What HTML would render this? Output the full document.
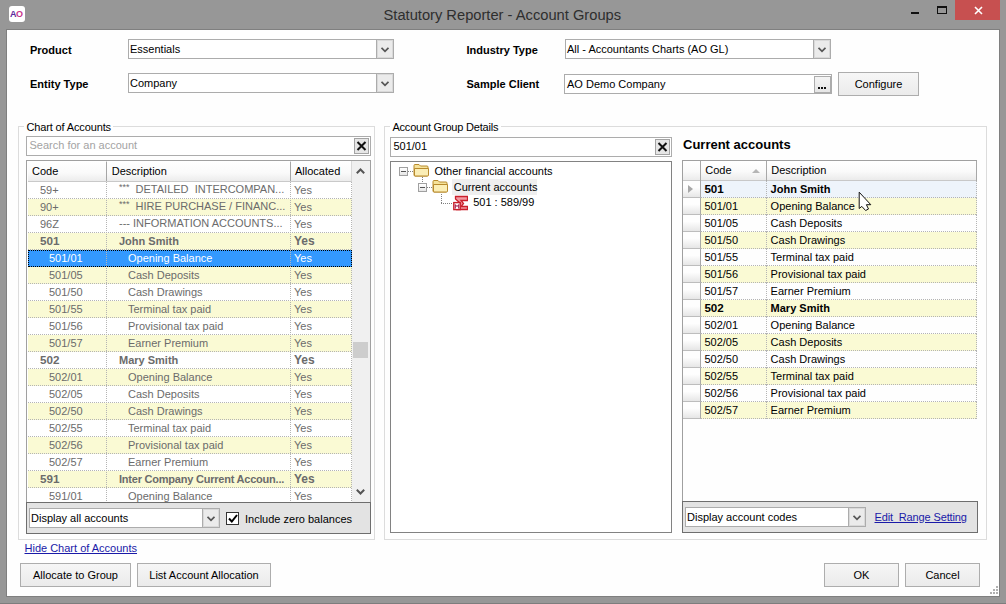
<!DOCTYPE html>
<html><head><meta charset="utf-8">
<style>
*{box-sizing:border-box;margin:0;padding:0}
html,body{width:1006px;height:604px;overflow:hidden;background:#979797;font-family:"Liberation Sans",sans-serif;font-size:11px;color:#000;position:relative}
.a{position:absolute}
.t{position:absolute;white-space:nowrap}
</style></head><body>
<div class="a" style="left:0px;top:603px;width:1006px;height:1px;background:#7d7d7d"></div>
<div class="a" style="left:6px;top:29px;width:994px;height:568px;background:#fefefe;border:1px solid #7f7f7f"></div>
<div class="a" style="left:9px;top:6px;width:16px;height:16px;background:#fff;border-radius:3px"></div>
<div class="t" style="left:10px;width:15px;font-size:9px;line-height:10px;font-weight:bold;letter-spacing:-0.5px;color:#5b2a9e;top:9px">A<span style="color:#c8338a">O</span></div>
<div class="t" style="left:383.5px;top:6.61px;font-size:14.7px;line-height:17px;color:#2e2e2e;">Statutory Reporter - Account Groups</div>
<div class="a" style="left:911px;top:12px;width:8px;height:2px;background:#111"></div>
<div class="a" style="left:937px;top:6px;width:10px;height:8px;border:1px solid #111;border-top-width:2px"></div>
<div class="a" style="left:955px;top:0px;width:45px;height:20px;background:#c75050"></div>
<svg class="a" style="left:974px;top:6px" width="9" height="9" viewBox="0 0 9 9"><path d="M1 1L8 8M8 1L1 8" stroke="#fff" stroke-width="1.6"/></svg>
<div class="t" style="left:30px;top:43.69px;font-size:11px;line-height:13px;font-weight:bold;">Product</div>
<div class="t" style="left:30px;top:77.69px;font-size:11px;line-height:13px;font-weight:bold;">Entity Type</div>
<div class="t" style="left:466.5px;top:43.69px;font-size:11px;line-height:13px;font-weight:bold;">Industry Type</div>
<div class="t" style="left:466.5px;top:77.99px;font-size:11px;line-height:13px;font-weight:bold;">Sample Client</div>
<div class="a" style="left:128px;top:39px;width:266px;height:20px;background:#fff;border:1px solid #acacac"></div>
<div class="a" style="left:376px;top:39px;width:18px;height:20px;background:#ebebeb;border:1px solid #acacac;box-shadow:inset 0 0 0 1px #d9d9d9"></div>
<svg class="a" style="left:381px;top:47px" width="8" height="6" viewBox="0 0 8 6"><path d="M0.5 0.8 L4 4.3 L7.5 0.8" fill="none" stroke="#555" stroke-width="1.8"/></svg>
<div class="t" style="left:130px;top:42.69px;font-size:11px;line-height:13px;">Essentials</div>
<div class="a" style="left:128px;top:73px;width:266px;height:20px;background:#fff;border:1px solid #acacac"></div>
<div class="a" style="left:376px;top:73px;width:18px;height:20px;background:#ebebeb;border:1px solid #acacac;box-shadow:inset 0 0 0 1px #d9d9d9"></div>
<svg class="a" style="left:381px;top:81px" width="8" height="6" viewBox="0 0 8 6"><path d="M0.5 0.8 L4 4.3 L7.5 0.8" fill="none" stroke="#555" stroke-width="1.8"/></svg>
<div class="t" style="left:130px;top:76.69px;font-size:11px;line-height:13px;">Company</div>
<div class="a" style="left:565px;top:39px;width:266px;height:20px;background:#fff;border:1px solid #acacac"></div>
<div class="a" style="left:813px;top:39px;width:18px;height:20px;background:#ebebeb;border:1px solid #acacac;box-shadow:inset 0 0 0 1px #d9d9d9"></div>
<svg class="a" style="left:818px;top:47px" width="8" height="6" viewBox="0 0 8 6"><path d="M0.5 0.8 L4 4.3 L7.5 0.8" fill="none" stroke="#555" stroke-width="1.8"/></svg>
<div class="t" style="left:567px;top:42.69px;font-size:11px;line-height:13px;">All - Accountants Charts (AO GL)</div>
<div class="a" style="left:564px;top:74px;width:268px;height:20px;background:#fff;border:1px solid #acacac"></div>
<div class="t" style="left:567px;top:77.69px;font-size:11px;line-height:13px;">AO Demo Company</div>
<div class="a" style="left:814px;top:76px;width:17px;height:17px;border:1px solid #acacac;background:linear-gradient(#f4f4f4,#e6e6e6)"></div>
<div class="a" style="left:818px;top:87px;width:2px;height:2px;background:#111;box-shadow:3px 0 #111,6px 0 #111"></div>
<div class="a" style="left:838px;top:72px;width:81px;height:24px;border:1px solid #adadad;background:linear-gradient(#f6f6f6,#ebebeb)"></div>
<div class="t" style="left:838px;top:76.17px;width:81px;text-align:center;line-height:16px">Configure</div>
<div class="a" style="left:18px;top:126px;width:357px;height:414px;border:1px solid #dcdcdc"></div>
<div class="a" style="left:24px;top:120px;width:89px;height:12px;background:#fefefe"></div>
<div class="t" style="left:26.5px;top:120.99px;font-size:11px;line-height:13px;letter-spacing:-0.14px">Chart of Accounts</div>
<div class="a" style="left:26px;top:136px;width:345px;height:20px;background:#fff;border:1px solid #acacac"></div>
<div class="t" style="left:29.5px;top:139.19px;font-size:11px;line-height:13px;color:#a3a3a3;">Search for an account</div>
<div class="a" style="left:354px;top:138px;width:15px;height:16px;border:1px solid #a3a3a3;background:#e6e6e6"></div>
<svg class="a" style="left:356px;top:141px" width="11" height="10" viewBox="0 0 11 10"><path d="M1.5 1L9.5 9M9.5 1L1.5 9" stroke="#111" stroke-width="2"/></svg>
<div class="a" style="left:26px;top:160px;width:345px;height:343px;background:#fff;border:1px solid #a0a0a0"></div>
<div class="a" style="left:28px;top:161px;width:79px;height:21px;background:linear-gradient(#ffffff 0%,#fafafa 60%,#ececec 100%);border-right:1px solid #d8d8d8;border-bottom:1px solid #c9c9c9"></div>
<div class="a" style="left:107px;top:161px;width:184px;height:21px;background:linear-gradient(#ffffff 0%,#fafafa 60%,#ececec 100%);border-right:1px solid #d8d8d8;border-bottom:1px solid #c9c9c9"></div>
<div class="a" style="left:291px;top:161px;width:61px;height:21px;background:linear-gradient(#ffffff 0%,#fafafa 60%,#ececec 100%);border-right:1px solid #d8d8d8;border-bottom:1px solid #c9c9c9"></div>
<div class="a" style="left:106px;top:162px;width:1px;height:19px;background:#a5a5a5"></div>
<div class="a" style="left:290px;top:162px;width:1px;height:19px;background:#a5a5a5"></div>
<div class="t" style="left:32px;top:165.29px;font-size:11px;line-height:13px;">Code</div>
<div class="t" style="left:111.8px;top:165.09px;font-size:11px;line-height:13px;">Description</div>
<div class="t" style="left:295px;top:165.09px;font-size:11px;line-height:13px;">Allocated</div>
<div class="a" style="left:352px;top:161px;width:18px;height:341px;background:#f0f0f0"></div>
<svg class="a" style="left:356px;top:168px" width="9" height="6" viewBox="0 0 9 6"><path d="M0.8 5.2L4.5 1.5L8.2 5.2" fill="none" stroke="#555" stroke-width="2"/></svg>
<svg class="a" style="left:356px;top:489px" width="9" height="6" viewBox="0 0 9 6"><path d="M0.8 0.8L4.5 4.5L8.2 0.8" fill="none" stroke="#555" stroke-width="2"/></svg>
<div class="a" style="left:353px;top:342px;width:15px;height:16px;background:#cdcdcd"></div>
<div class="a" style="left:28px;top:182px;width:324px;height:320px;overflow:hidden">
<div class="a" style="left:0px;top:0px;width:324px;height:17px;background:#ffffff"></div>
<div class="a" style="left:0px;top:16px;width:324px;height:1px;background-image:linear-gradient(to right,#b4b4b4 50%,transparent 50%);background-size:2px 1px;background-repeat:repeat-x"></div>
<div class="t" style="left:12px;top:1.59px;font-size:11px;line-height:13px;color:#6b6b6b;">59+</div>
<div class="t" style="left:91px;top:0.59px;font-size:11px;line-height:13px;color:#6b6b6b;"><span style="font-size:9px;position:relative;top:-3px;margin-right:3px">***</span> DETAILED&nbsp; INTERCOMPAN...</div>
<div class="t" style="left:266px;top:1.59px;font-size:11px;line-height:13px;color:#6b6b6b;">Yes</div>
<div class="a" style="left:0px;top:17px;width:324px;height:17px;background:#fafad4"></div>
<div class="a" style="left:0px;top:33px;width:324px;height:1px;background-image:linear-gradient(to right,#b4b4b4 50%,transparent 50%);background-size:2px 1px;background-repeat:repeat-x"></div>
<div class="t" style="left:12px;top:18.59px;font-size:11px;line-height:13px;color:#6b6b6b;">90+</div>
<div class="t" style="left:91px;top:17.59px;font-size:11px;line-height:13px;color:#6b6b6b;"><span style="font-size:9px;position:relative;top:-3px;margin-right:3px">***</span> HIRE PURCHASE / FINANC...</div>
<div class="t" style="left:266px;top:18.59px;font-size:11px;line-height:13px;color:#6b6b6b;">Yes</div>
<div class="a" style="left:0px;top:34px;width:324px;height:17px;background:#ffffff"></div>
<div class="a" style="left:0px;top:50px;width:324px;height:1px;background-image:linear-gradient(to right,#b4b4b4 50%,transparent 50%);background-size:2px 1px;background-repeat:repeat-x"></div>
<div class="t" style="left:12px;top:35.59px;font-size:11px;line-height:13px;color:#6b6b6b;">96Z</div>
<div class="t" style="left:91px;top:34.59px;font-size:11px;line-height:13px;color:#6b6b6b;">--- INFORMATION ACCOUNTS...</div>
<div class="t" style="left:266px;top:35.59px;font-size:11px;line-height:13px;color:#6b6b6b;">Yes</div>
<div class="a" style="left:0px;top:51px;width:324px;height:17px;background:#fafad4"></div>
<div class="a" style="left:0px;top:67px;width:324px;height:1px;background-image:linear-gradient(to right,#b4b4b4 50%,transparent 50%);background-size:2px 1px;background-repeat:repeat-x"></div>
<div class="t" style="left:12px;top:51.85px;font-size:11.7px;line-height:13px;font-weight:bold;color:#6b6b6b;">501</div>
<div class="t" style="left:91px;top:52.59px;font-size:11px;line-height:13px;font-weight:bold;color:#6b6b6b;">John Smith</div>
<div class="t" style="left:266px;top:51.74px;font-size:12px;line-height:14px;font-weight:bold;color:#6b6b6b;">Yes</div>
<div class="a" style="left:0px;top:68px;width:324px;height:17px;background:#3399ff"></div>
<div class="t" style="left:21px;top:69.59px;font-size:11px;line-height:13px;color:#fff;">501/01</div>
<div class="t" style="left:100px;top:69.59px;font-size:11px;line-height:13px;color:#fff;">Opening Balance</div>
<div class="t" style="left:266px;top:69.59px;font-size:11px;line-height:13px;color:#fff;">Yes</div>
<div class="a" style="left:0px;top:85px;width:324px;height:17px;background:#fafad4"></div>
<div class="a" style="left:0px;top:101px;width:324px;height:1px;background-image:linear-gradient(to right,#b4b4b4 50%,transparent 50%);background-size:2px 1px;background-repeat:repeat-x"></div>
<div class="t" style="left:21px;top:86.59px;font-size:11px;line-height:13px;color:#6b6b6b;">501/05</div>
<div class="t" style="left:100px;top:86.59px;font-size:11px;line-height:13px;color:#6b6b6b;">Cash Deposits</div>
<div class="t" style="left:266px;top:86.59px;font-size:11px;line-height:13px;color:#6b6b6b;">Yes</div>
<div class="a" style="left:0px;top:102px;width:324px;height:17px;background:#ffffff"></div>
<div class="a" style="left:0px;top:118px;width:324px;height:1px;background-image:linear-gradient(to right,#b4b4b4 50%,transparent 50%);background-size:2px 1px;background-repeat:repeat-x"></div>
<div class="t" style="left:21px;top:103.59px;font-size:11px;line-height:13px;color:#6b6b6b;">501/50</div>
<div class="t" style="left:100px;top:103.59px;font-size:11px;line-height:13px;color:#6b6b6b;">Cash Drawings</div>
<div class="t" style="left:266px;top:103.59px;font-size:11px;line-height:13px;color:#6b6b6b;">Yes</div>
<div class="a" style="left:0px;top:119px;width:324px;height:17px;background:#fafad4"></div>
<div class="a" style="left:0px;top:135px;width:324px;height:1px;background-image:linear-gradient(to right,#b4b4b4 50%,transparent 50%);background-size:2px 1px;background-repeat:repeat-x"></div>
<div class="t" style="left:21px;top:120.59px;font-size:11px;line-height:13px;color:#6b6b6b;">501/55</div>
<div class="t" style="left:100px;top:120.59px;font-size:11px;line-height:13px;color:#6b6b6b;">Terminal tax paid</div>
<div class="t" style="left:266px;top:120.59px;font-size:11px;line-height:13px;color:#6b6b6b;">Yes</div>
<div class="a" style="left:0px;top:136px;width:324px;height:17px;background:#ffffff"></div>
<div class="a" style="left:0px;top:152px;width:324px;height:1px;background-image:linear-gradient(to right,#b4b4b4 50%,transparent 50%);background-size:2px 1px;background-repeat:repeat-x"></div>
<div class="t" style="left:21px;top:137.59px;font-size:11px;line-height:13px;color:#6b6b6b;">501/56</div>
<div class="t" style="left:100px;top:137.59px;font-size:11px;line-height:13px;color:#6b6b6b;">Provisional tax paid</div>
<div class="t" style="left:266px;top:137.59px;font-size:11px;line-height:13px;color:#6b6b6b;">Yes</div>
<div class="a" style="left:0px;top:153px;width:324px;height:17px;background:#fafad4"></div>
<div class="a" style="left:0px;top:169px;width:324px;height:1px;background-image:linear-gradient(to right,#b4b4b4 50%,transparent 50%);background-size:2px 1px;background-repeat:repeat-x"></div>
<div class="t" style="left:21px;top:154.59px;font-size:11px;line-height:13px;color:#6b6b6b;">501/57</div>
<div class="t" style="left:100px;top:154.59px;font-size:11px;line-height:13px;color:#6b6b6b;">Earner Premium</div>
<div class="t" style="left:266px;top:154.59px;font-size:11px;line-height:13px;color:#6b6b6b;">Yes</div>
<div class="a" style="left:0px;top:170px;width:324px;height:17px;background:#ffffff"></div>
<div class="a" style="left:0px;top:186px;width:324px;height:1px;background-image:linear-gradient(to right,#b4b4b4 50%,transparent 50%);background-size:2px 1px;background-repeat:repeat-x"></div>
<div class="t" style="left:12px;top:170.85px;font-size:11.7px;line-height:13px;font-weight:bold;color:#6b6b6b;">502</div>
<div class="t" style="left:91px;top:171.59px;font-size:11px;line-height:13px;font-weight:bold;color:#6b6b6b;">Mary Smith</div>
<div class="t" style="left:266px;top:170.74px;font-size:12px;line-height:14px;font-weight:bold;color:#6b6b6b;">Yes</div>
<div class="a" style="left:0px;top:187px;width:324px;height:17px;background:#fafad4"></div>
<div class="a" style="left:0px;top:203px;width:324px;height:1px;background-image:linear-gradient(to right,#b4b4b4 50%,transparent 50%);background-size:2px 1px;background-repeat:repeat-x"></div>
<div class="t" style="left:21px;top:188.59px;font-size:11px;line-height:13px;color:#6b6b6b;">502/01</div>
<div class="t" style="left:100px;top:188.59px;font-size:11px;line-height:13px;color:#6b6b6b;">Opening Balance</div>
<div class="t" style="left:266px;top:188.59px;font-size:11px;line-height:13px;color:#6b6b6b;">Yes</div>
<div class="a" style="left:0px;top:204px;width:324px;height:17px;background:#ffffff"></div>
<div class="a" style="left:0px;top:220px;width:324px;height:1px;background-image:linear-gradient(to right,#b4b4b4 50%,transparent 50%);background-size:2px 1px;background-repeat:repeat-x"></div>
<div class="t" style="left:21px;top:205.59px;font-size:11px;line-height:13px;color:#6b6b6b;">502/05</div>
<div class="t" style="left:100px;top:205.59px;font-size:11px;line-height:13px;color:#6b6b6b;">Cash Deposits</div>
<div class="t" style="left:266px;top:205.59px;font-size:11px;line-height:13px;color:#6b6b6b;">Yes</div>
<div class="a" style="left:0px;top:221px;width:324px;height:17px;background:#fafad4"></div>
<div class="a" style="left:0px;top:237px;width:324px;height:1px;background-image:linear-gradient(to right,#b4b4b4 50%,transparent 50%);background-size:2px 1px;background-repeat:repeat-x"></div>
<div class="t" style="left:21px;top:222.59px;font-size:11px;line-height:13px;color:#6b6b6b;">502/50</div>
<div class="t" style="left:100px;top:222.59px;font-size:11px;line-height:13px;color:#6b6b6b;">Cash Drawings</div>
<div class="t" style="left:266px;top:222.59px;font-size:11px;line-height:13px;color:#6b6b6b;">Yes</div>
<div class="a" style="left:0px;top:238px;width:324px;height:17px;background:#ffffff"></div>
<div class="a" style="left:0px;top:254px;width:324px;height:1px;background-image:linear-gradient(to right,#b4b4b4 50%,transparent 50%);background-size:2px 1px;background-repeat:repeat-x"></div>
<div class="t" style="left:21px;top:239.59px;font-size:11px;line-height:13px;color:#6b6b6b;">502/55</div>
<div class="t" style="left:100px;top:239.59px;font-size:11px;line-height:13px;color:#6b6b6b;">Terminal tax paid</div>
<div class="t" style="left:266px;top:239.59px;font-size:11px;line-height:13px;color:#6b6b6b;">Yes</div>
<div class="a" style="left:0px;top:255px;width:324px;height:17px;background:#fafad4"></div>
<div class="a" style="left:0px;top:271px;width:324px;height:1px;background-image:linear-gradient(to right,#b4b4b4 50%,transparent 50%);background-size:2px 1px;background-repeat:repeat-x"></div>
<div class="t" style="left:21px;top:256.59px;font-size:11px;line-height:13px;color:#6b6b6b;">502/56</div>
<div class="t" style="left:100px;top:256.59px;font-size:11px;line-height:13px;color:#6b6b6b;">Provisional tax paid</div>
<div class="t" style="left:266px;top:256.59px;font-size:11px;line-height:13px;color:#6b6b6b;">Yes</div>
<div class="a" style="left:0px;top:272px;width:324px;height:17px;background:#ffffff"></div>
<div class="a" style="left:0px;top:288px;width:324px;height:1px;background-image:linear-gradient(to right,#b4b4b4 50%,transparent 50%);background-size:2px 1px;background-repeat:repeat-x"></div>
<div class="t" style="left:21px;top:273.59px;font-size:11px;line-height:13px;color:#6b6b6b;">502/57</div>
<div class="t" style="left:100px;top:273.59px;font-size:11px;line-height:13px;color:#6b6b6b;">Earner Premium</div>
<div class="t" style="left:266px;top:273.59px;font-size:11px;line-height:13px;color:#6b6b6b;">Yes</div>
<div class="a" style="left:0px;top:289px;width:324px;height:17px;background:#fafad4"></div>
<div class="a" style="left:0px;top:305px;width:324px;height:1px;background-image:linear-gradient(to right,#b4b4b4 50%,transparent 50%);background-size:2px 1px;background-repeat:repeat-x"></div>
<div class="t" style="left:12px;top:289.85px;font-size:11.7px;line-height:13px;font-weight:bold;color:#6b6b6b;">591</div>
<div class="t" style="left:91px;top:290.59px;font-size:11px;line-height:13px;font-weight:bold;color:#6b6b6b;"><span style="letter-spacing:-0.22px">Inter Company Current Accoun...</span></div>
<div class="t" style="left:266px;top:289.74px;font-size:12px;line-height:14px;font-weight:bold;color:#6b6b6b;">Yes</div>
<div class="a" style="left:0px;top:306px;width:324px;height:17px;background:#ffffff"></div>
<div class="a" style="left:0px;top:322px;width:324px;height:1px;background-image:linear-gradient(to right,#b4b4b4 50%,transparent 50%);background-size:2px 1px;background-repeat:repeat-x"></div>
<div class="t" style="left:21px;top:307.59px;font-size:11px;line-height:13px;color:#6b6b6b;">591/01</div>
<div class="t" style="left:100px;top:307.59px;font-size:11px;line-height:13px;color:#6b6b6b;">Opening Balance</div>
<div class="t" style="left:266px;top:307.59px;font-size:11px;line-height:13px;color:#6b6b6b;">Yes</div>
<div class="a" style="left:78px;top:0px;width:1px;height:320px;background-image:linear-gradient(#b4b4b4 50%,transparent 50%);background-size:1px 2px;background-repeat:repeat-y"></div>
<div class="a" style="left:262px;top:0px;width:1px;height:320px;background-image:linear-gradient(#b4b4b4 50%,transparent 50%);background-size:1px 2px;background-repeat:repeat-y"></div>
<div class="a" style="left:323px;top:0px;width:1px;height:320px;background-image:linear-gradient(#b4b4b4 50%,transparent 50%);background-size:1px 2px;background-repeat:repeat-y"></div>
<div class="a" style="left:0px;top:68px;width:324px;height:17px;border:1px dotted #000"></div>
</div>
<div class="a" style="left:26px;top:502px;width:345px;height:32px;background:#e3e3e3;border:1px solid #6e6e6e"></div>
<div class="a" style="left:29px;top:508px;width:191px;height:20px;background:#fff;border:1px solid #acacac"></div>
<div class="a" style="left:202px;top:508px;width:18px;height:20px;background:#ebebeb;border:1px solid #acacac;box-shadow:inset 0 0 0 1px #d9d9d9"></div>
<svg class="a" style="left:207px;top:516px" width="8" height="6" viewBox="0 0 8 6"><path d="M0.5 0.8 L4 4.3 L7.5 0.8" fill="none" stroke="#555" stroke-width="1.8"/></svg>
<div class="t" style="left:31px;top:511.69px;font-size:11px;line-height:13px;">Display all accounts</div>
<div class="a" style="left:226px;top:512px;width:13px;height:13px;background:#fff;border:1px solid #333"></div>
<svg class="a" style="left:228px;top:514px" width="10" height="9" viewBox="0 0 10 9"><path d="M1 4.5L3.8 7.5L9 1" fill="none" stroke="#000" stroke-width="2"/></svg>
<div class="t" style="left:245px;top:513.19px;font-size:11px;line-height:13px;">Include zero balances</div>
<div class="t" style="left:24.5px;top:541.69px;font-size:11px;line-height:13px;color:#1a1aa8;"><u>Hide Chart of Accounts</u></div>
<div class="a" style="left:20px;top:563px;width:111px;height:24px;border:1px solid #adadad;background:linear-gradient(#f6f6f6,#ebebeb)"></div>
<div class="t" style="left:20px;top:567.17px;width:111px;text-align:center;line-height:16px">Allocate to Group</div>
<div class="a" style="left:137px;top:563px;width:134px;height:24px;border:1px solid #adadad;background:linear-gradient(#f6f6f6,#ebebeb)"></div>
<div class="t" style="left:137px;top:567.17px;width:134px;text-align:center;line-height:16px">List Account Allocation</div>
<div class="a" style="left:824px;top:563px;width:75px;height:24px;border:1px solid #adadad;background:linear-gradient(#f6f6f6,#ebebeb)"></div>
<div class="t" style="left:824px;top:567.17px;width:75px;text-align:center;line-height:16px">OK</div>
<div class="a" style="left:905px;top:563px;width:75px;height:24px;border:1px solid #adadad;background:linear-gradient(#f6f6f6,#ebebeb)"></div>
<div class="t" style="left:905px;top:567.17px;width:75px;text-align:center;line-height:16px">Cancel</div>
<div class="a" style="left:996px;top:586px;width:2px;height:2px;background:#b0b0b0"></div>
<div class="a" style="left:993px;top:589px;width:2px;height:2px;background:#b0b0b0"></div>
<div class="a" style="left:996px;top:589px;width:2px;height:2px;background:#b0b0b0"></div>
<div class="a" style="left:990px;top:592px;width:2px;height:2px;background:#b0b0b0"></div>
<div class="a" style="left:993px;top:592px;width:2px;height:2px;background:#b0b0b0"></div>
<div class="a" style="left:996px;top:592px;width:2px;height:2px;background:#b0b0b0"></div>
<div class="a" style="left:384px;top:126px;width:603px;height:414px;border:1px solid #dcdcdc"></div>
<div class="a" style="left:390px;top:120px;width:111px;height:12px;background:#fefefe"></div>
<div class="t" style="left:392.4px;top:120.99px;font-size:11px;line-height:13px;letter-spacing:-0.2px">Account Group Details</div>
<div class="a" style="left:390px;top:137px;width:282px;height:20px;background:#fff;border:1px solid #acacac"></div>
<div class="t" style="left:393.4px;top:140.09px;font-size:11px;line-height:13px;">501/01</div>
<div class="a" style="left:655px;top:139px;width:15px;height:16px;border:1px solid #a3a3a3;background:#e6e6e6"></div>
<svg class="a" style="left:657px;top:142px" width="11" height="10" viewBox="0 0 11 10"><path d="M1.5 1L9.5 9M9.5 1L1.5 9" stroke="#111" stroke-width="2"/></svg>
<div class="a" style="left:390px;top:161px;width:282px;height:372px;background:#fff;border:1px solid #828282"></div>
<div class="a" style="left:399px;top:167px;width:9px;height:9px;background:linear-gradient(#fff,#e6e6e6);border:1px solid #a0a0a0"></div>
<div class="a" style="left:401px;top:171px;width:5px;height:1px;background:#555"></div>
<div class="a" style="left:408px;top:171px;width:5px;height:1px;background-image:linear-gradient(to right,#808080 50%,transparent 50%);background-size:2px 1px"></div>
<svg class="a" style="left:413px;top:163px" width="17" height="14" viewBox="0 0 17 14"><path d="M1 2.5Q1 1.5 2 1.5H6L7.5 3H14Q15 3 15 4V12Q15 13 14 13H2Q1 13 1 12Z" fill="#f5e29a" stroke="#b88a2c" stroke-width="1"/><path d="M1.5 5.5H15.5V12Q15.5 13 14.5 13H2Q1.5 13 1.5 12Z" fill="#fbeeb6" stroke="#b88a2c" stroke-width="1"/></svg>
<div class="t" style="left:434.5px;top:164.69px;font-size:11px;line-height:13px;">Other financial accounts</div>
<div class="a" style="left:422px;top:177px;width:1px;height:6px;background-image:linear-gradient(#808080 50%,transparent 50%);background-size:1px 2px"></div>
<div class="a" style="left:452px;top:179px;width:85px;height:16px;background:#efefef"></div>
<div class="a" style="left:418px;top:183px;width:9px;height:9px;background:linear-gradient(#fff,#e6e6e6);border:1px solid #a0a0a0"></div>
<div class="a" style="left:420px;top:187px;width:5px;height:1px;background:#555"></div>
<div class="a" style="left:427px;top:187px;width:5px;height:1px;background-image:linear-gradient(to right,#808080 50%,transparent 50%);background-size:2px 1px"></div>
<svg class="a" style="left:432px;top:179px" width="17" height="14" viewBox="0 0 17 14"><path d="M1 2.5Q1 1.5 2 1.5H6L7.5 3H14Q15 3 15 4V12Q15 13 14 13H2Q1 13 1 12Z" fill="#f5e29a" stroke="#b88a2c" stroke-width="1"/><path d="M1.5 5.5H15.5V12Q15.5 13 14.5 13H2Q1.5 13 1.5 12Z" fill="#fbeeb6" stroke="#b88a2c" stroke-width="1"/></svg>
<div class="t" style="left:453.7px;top:180.69px;font-size:11px;line-height:13px;">Current accounts</div>
<div class="a" style="left:441px;top:194px;width:1px;height:9px;background-image:linear-gradient(#808080 50%,transparent 50%);background-size:1px 2px"></div>
<div class="a" style="left:441px;top:203px;width:12px;height:1px;background-image:linear-gradient(to right,#808080 50%,transparent 50%);background-size:2px 1px"></div>
<svg class="a" style="left:453px;top:195px" width="15" height="16" viewBox="0 0 15 16"><path d="M2.5 1.5H14.5V5.5H8L10.5 8.5L8 11.5H14.5V14.5H4L7.5 8.5L2.5 4Z" fill="#f29aa2" stroke="#c91f2b" stroke-width="1.3" stroke-linejoin="miter"/><rect x="0.8" y="7.6" width="6.4" height="7" fill="#fff" stroke="#c91f2b" stroke-width="1.4"/><path d="M2.3 13.6V9.6L4 11.6L5.7 9.6V13.6" fill="none" stroke="#a01040" stroke-width="1"/></svg>
<div class="t" style="left:473.2px;top:196.49px;font-size:11px;line-height:13px;">501 : 589/99</div>
<div class="t" style="left:683px;top:136.50px;font-size:13px;line-height:15px;font-weight:bold;">Current accounts</div>
<div class="a" style="left:682px;top:160px;width:295px;height:342px;background:#fefefe;border-left:1px solid #a0a0a0;border-top:1px solid #a0a0a0"></div>
<div class="a" style="left:683px;top:161px;width:18px;height:20px;background:linear-gradient(#ffffff 0%,#fafafa 55%,#ebebeb 100%);border-right:1px solid #c8c8c8;border-bottom:1px solid #c8c8c8"></div>
<div class="a" style="left:701px;top:161px;width:66px;height:20px;background:linear-gradient(#ffffff 0%,#fafafa 55%,#ebebeb 100%);border-right:1px solid #c8c8c8;border-bottom:1px solid #c8c8c8"></div>
<div class="a" style="left:767px;top:161px;width:210px;height:20px;background:linear-gradient(#ffffff 0%,#fafafa 55%,#ebebeb 100%);border-right:1px solid #c8c8c8;border-bottom:1px solid #c8c8c8"></div>
<div class="a" style="left:700px;top:161px;width:1px;height:20px;background:#a8a8a8"></div>
<div class="a" style="left:766px;top:161px;width:1px;height:20px;background:#a8a8a8"></div>
<div class="a" style="left:976px;top:161px;width:1px;height:20px;background:#a8a8a8"></div>
<div class="t" style="left:705.3px;top:164.09px;font-size:11px;line-height:13px;">Code</div>
<svg class="a" style="left:752px;top:169px" width="8" height="4" viewBox="0 0 8 4"><path d="M0 4L4 0L8 4Z" fill="#b5b5b5"/></svg>
<div class="t" style="left:771.3px;top:164.09px;font-size:11px;line-height:13px;">Description</div>
<div class="a" style="left:683px;top:181px;width:18px;height:17px;background:linear-gradient(#fefefe 40%,#e6e6e6);border-right:1px solid #a8a8a8;border-bottom:1px solid #bdbdbd"></div>
<div class="a" style="left:701px;top:181px;width:276px;height:17px;background:#eef4fb"></div>
<div class="a" style="left:701px;top:197px;width:276px;height:1px;background-image:linear-gradient(to right,#b4b4b4 50%,transparent 50%);background-size:2px 1px;background-repeat:repeat-x"></div>
<div class="a" style="left:766px;top:181px;width:1px;height:17px;background-image:linear-gradient(#b4b4b4 50%,transparent 50%);background-size:1px 2px;background-repeat:repeat-y"></div>
<div class="a" style="left:976px;top:181px;width:1px;height:17px;background-image:linear-gradient(#b4b4b4 50%,transparent 50%);background-size:1px 2px;background-repeat:repeat-y"></div>
<div class="t" style="left:704.4px;top:182.28px;font-size:11.6px;line-height:13px;font-weight:bold;">501</div>
<div class="t" style="left:770.6px;top:183.09px;font-size:11px;line-height:13px;font-weight:bold;">John Smith</div>
<div class="a" style="left:683px;top:198px;width:18px;height:17px;background:linear-gradient(#fefefe 40%,#e6e6e6);border-right:1px solid #a8a8a8;border-bottom:1px solid #bdbdbd"></div>
<div class="a" style="left:701px;top:198px;width:276px;height:17px;background:#fafad4"></div>
<div class="a" style="left:701px;top:214px;width:276px;height:1px;background-image:linear-gradient(to right,#b4b4b4 50%,transparent 50%);background-size:2px 1px;background-repeat:repeat-x"></div>
<div class="a" style="left:766px;top:198px;width:1px;height:17px;background-image:linear-gradient(#b4b4b4 50%,transparent 50%);background-size:1px 2px;background-repeat:repeat-y"></div>
<div class="a" style="left:976px;top:198px;width:1px;height:17px;background-image:linear-gradient(#b4b4b4 50%,transparent 50%);background-size:1px 2px;background-repeat:repeat-y"></div>
<div class="t" style="left:704.4px;top:200.09px;font-size:11px;line-height:13px;">501/01</div>
<div class="t" style="left:770.6px;top:200.09px;font-size:11px;line-height:13px;">Opening Balance</div>
<div class="a" style="left:683px;top:215px;width:18px;height:17px;background:linear-gradient(#fefefe 40%,#e6e6e6);border-right:1px solid #a8a8a8;border-bottom:1px solid #bdbdbd"></div>
<div class="a" style="left:701px;top:215px;width:276px;height:17px;background:#fefefe"></div>
<div class="a" style="left:701px;top:231px;width:276px;height:1px;background-image:linear-gradient(to right,#b4b4b4 50%,transparent 50%);background-size:2px 1px;background-repeat:repeat-x"></div>
<div class="a" style="left:766px;top:215px;width:1px;height:17px;background-image:linear-gradient(#b4b4b4 50%,transparent 50%);background-size:1px 2px;background-repeat:repeat-y"></div>
<div class="a" style="left:976px;top:215px;width:1px;height:17px;background-image:linear-gradient(#b4b4b4 50%,transparent 50%);background-size:1px 2px;background-repeat:repeat-y"></div>
<div class="t" style="left:704.4px;top:217.09px;font-size:11px;line-height:13px;">501/05</div>
<div class="t" style="left:770.6px;top:217.09px;font-size:11px;line-height:13px;">Cash Deposits</div>
<div class="a" style="left:683px;top:232px;width:18px;height:17px;background:linear-gradient(#fefefe 40%,#e6e6e6);border-right:1px solid #a8a8a8;border-bottom:1px solid #bdbdbd"></div>
<div class="a" style="left:701px;top:232px;width:276px;height:17px;background:#fafad4"></div>
<div class="a" style="left:701px;top:248px;width:276px;height:1px;background-image:linear-gradient(to right,#b4b4b4 50%,transparent 50%);background-size:2px 1px;background-repeat:repeat-x"></div>
<div class="a" style="left:766px;top:232px;width:1px;height:17px;background-image:linear-gradient(#b4b4b4 50%,transparent 50%);background-size:1px 2px;background-repeat:repeat-y"></div>
<div class="a" style="left:976px;top:232px;width:1px;height:17px;background-image:linear-gradient(#b4b4b4 50%,transparent 50%);background-size:1px 2px;background-repeat:repeat-y"></div>
<div class="t" style="left:704.4px;top:234.09px;font-size:11px;line-height:13px;">501/50</div>
<div class="t" style="left:770.6px;top:234.09px;font-size:11px;line-height:13px;">Cash Drawings</div>
<div class="a" style="left:683px;top:249px;width:18px;height:17px;background:linear-gradient(#fefefe 40%,#e6e6e6);border-right:1px solid #a8a8a8;border-bottom:1px solid #bdbdbd"></div>
<div class="a" style="left:701px;top:249px;width:276px;height:17px;background:#fefefe"></div>
<div class="a" style="left:701px;top:265px;width:276px;height:1px;background-image:linear-gradient(to right,#b4b4b4 50%,transparent 50%);background-size:2px 1px;background-repeat:repeat-x"></div>
<div class="a" style="left:766px;top:249px;width:1px;height:17px;background-image:linear-gradient(#b4b4b4 50%,transparent 50%);background-size:1px 2px;background-repeat:repeat-y"></div>
<div class="a" style="left:976px;top:249px;width:1px;height:17px;background-image:linear-gradient(#b4b4b4 50%,transparent 50%);background-size:1px 2px;background-repeat:repeat-y"></div>
<div class="t" style="left:704.4px;top:251.09px;font-size:11px;line-height:13px;">501/55</div>
<div class="t" style="left:770.6px;top:251.09px;font-size:11px;line-height:13px;">Terminal tax paid</div>
<div class="a" style="left:683px;top:266px;width:18px;height:17px;background:linear-gradient(#fefefe 40%,#e6e6e6);border-right:1px solid #a8a8a8;border-bottom:1px solid #bdbdbd"></div>
<div class="a" style="left:701px;top:266px;width:276px;height:17px;background:#fafad4"></div>
<div class="a" style="left:701px;top:282px;width:276px;height:1px;background-image:linear-gradient(to right,#b4b4b4 50%,transparent 50%);background-size:2px 1px;background-repeat:repeat-x"></div>
<div class="a" style="left:766px;top:266px;width:1px;height:17px;background-image:linear-gradient(#b4b4b4 50%,transparent 50%);background-size:1px 2px;background-repeat:repeat-y"></div>
<div class="a" style="left:976px;top:266px;width:1px;height:17px;background-image:linear-gradient(#b4b4b4 50%,transparent 50%);background-size:1px 2px;background-repeat:repeat-y"></div>
<div class="t" style="left:704.4px;top:268.09px;font-size:11px;line-height:13px;">501/56</div>
<div class="t" style="left:770.6px;top:268.09px;font-size:11px;line-height:13px;">Provisional tax paid</div>
<div class="a" style="left:683px;top:283px;width:18px;height:17px;background:linear-gradient(#fefefe 40%,#e6e6e6);border-right:1px solid #a8a8a8;border-bottom:1px solid #bdbdbd"></div>
<div class="a" style="left:701px;top:283px;width:276px;height:17px;background:#fefefe"></div>
<div class="a" style="left:701px;top:299px;width:276px;height:1px;background-image:linear-gradient(to right,#b4b4b4 50%,transparent 50%);background-size:2px 1px;background-repeat:repeat-x"></div>
<div class="a" style="left:766px;top:283px;width:1px;height:17px;background-image:linear-gradient(#b4b4b4 50%,transparent 50%);background-size:1px 2px;background-repeat:repeat-y"></div>
<div class="a" style="left:976px;top:283px;width:1px;height:17px;background-image:linear-gradient(#b4b4b4 50%,transparent 50%);background-size:1px 2px;background-repeat:repeat-y"></div>
<div class="t" style="left:704.4px;top:285.09px;font-size:11px;line-height:13px;">501/57</div>
<div class="t" style="left:770.6px;top:285.09px;font-size:11px;line-height:13px;">Earner Premium</div>
<div class="a" style="left:683px;top:300px;width:18px;height:17px;background:linear-gradient(#fefefe 40%,#e6e6e6);border-right:1px solid #a8a8a8;border-bottom:1px solid #bdbdbd"></div>
<div class="a" style="left:701px;top:300px;width:276px;height:17px;background:#fafad4"></div>
<div class="a" style="left:701px;top:316px;width:276px;height:1px;background-image:linear-gradient(to right,#b4b4b4 50%,transparent 50%);background-size:2px 1px;background-repeat:repeat-x"></div>
<div class="a" style="left:766px;top:300px;width:1px;height:17px;background-image:linear-gradient(#b4b4b4 50%,transparent 50%);background-size:1px 2px;background-repeat:repeat-y"></div>
<div class="a" style="left:976px;top:300px;width:1px;height:17px;background-image:linear-gradient(#b4b4b4 50%,transparent 50%);background-size:1px 2px;background-repeat:repeat-y"></div>
<div class="t" style="left:704.4px;top:301.28px;font-size:11.6px;line-height:13px;font-weight:bold;">502</div>
<div class="t" style="left:770.6px;top:302.09px;font-size:11px;line-height:13px;font-weight:bold;">Mary Smith</div>
<div class="a" style="left:683px;top:317px;width:18px;height:17px;background:linear-gradient(#fefefe 40%,#e6e6e6);border-right:1px solid #a8a8a8;border-bottom:1px solid #bdbdbd"></div>
<div class="a" style="left:701px;top:317px;width:276px;height:17px;background:#fefefe"></div>
<div class="a" style="left:701px;top:333px;width:276px;height:1px;background-image:linear-gradient(to right,#b4b4b4 50%,transparent 50%);background-size:2px 1px;background-repeat:repeat-x"></div>
<div class="a" style="left:766px;top:317px;width:1px;height:17px;background-image:linear-gradient(#b4b4b4 50%,transparent 50%);background-size:1px 2px;background-repeat:repeat-y"></div>
<div class="a" style="left:976px;top:317px;width:1px;height:17px;background-image:linear-gradient(#b4b4b4 50%,transparent 50%);background-size:1px 2px;background-repeat:repeat-y"></div>
<div class="t" style="left:704.4px;top:319.09px;font-size:11px;line-height:13px;">502/01</div>
<div class="t" style="left:770.6px;top:319.09px;font-size:11px;line-height:13px;">Opening Balance</div>
<div class="a" style="left:683px;top:334px;width:18px;height:17px;background:linear-gradient(#fefefe 40%,#e6e6e6);border-right:1px solid #a8a8a8;border-bottom:1px solid #bdbdbd"></div>
<div class="a" style="left:701px;top:334px;width:276px;height:17px;background:#fafad4"></div>
<div class="a" style="left:701px;top:350px;width:276px;height:1px;background-image:linear-gradient(to right,#b4b4b4 50%,transparent 50%);background-size:2px 1px;background-repeat:repeat-x"></div>
<div class="a" style="left:766px;top:334px;width:1px;height:17px;background-image:linear-gradient(#b4b4b4 50%,transparent 50%);background-size:1px 2px;background-repeat:repeat-y"></div>
<div class="a" style="left:976px;top:334px;width:1px;height:17px;background-image:linear-gradient(#b4b4b4 50%,transparent 50%);background-size:1px 2px;background-repeat:repeat-y"></div>
<div class="t" style="left:704.4px;top:336.09px;font-size:11px;line-height:13px;">502/05</div>
<div class="t" style="left:770.6px;top:336.09px;font-size:11px;line-height:13px;">Cash Deposits</div>
<div class="a" style="left:683px;top:351px;width:18px;height:17px;background:linear-gradient(#fefefe 40%,#e6e6e6);border-right:1px solid #a8a8a8;border-bottom:1px solid #bdbdbd"></div>
<div class="a" style="left:701px;top:351px;width:276px;height:17px;background:#fefefe"></div>
<div class="a" style="left:701px;top:367px;width:276px;height:1px;background-image:linear-gradient(to right,#b4b4b4 50%,transparent 50%);background-size:2px 1px;background-repeat:repeat-x"></div>
<div class="a" style="left:766px;top:351px;width:1px;height:17px;background-image:linear-gradient(#b4b4b4 50%,transparent 50%);background-size:1px 2px;background-repeat:repeat-y"></div>
<div class="a" style="left:976px;top:351px;width:1px;height:17px;background-image:linear-gradient(#b4b4b4 50%,transparent 50%);background-size:1px 2px;background-repeat:repeat-y"></div>
<div class="t" style="left:704.4px;top:353.09px;font-size:11px;line-height:13px;">502/50</div>
<div class="t" style="left:770.6px;top:353.09px;font-size:11px;line-height:13px;">Cash Drawings</div>
<div class="a" style="left:683px;top:368px;width:18px;height:17px;background:linear-gradient(#fefefe 40%,#e6e6e6);border-right:1px solid #a8a8a8;border-bottom:1px solid #bdbdbd"></div>
<div class="a" style="left:701px;top:368px;width:276px;height:17px;background:#fafad4"></div>
<div class="a" style="left:701px;top:384px;width:276px;height:1px;background-image:linear-gradient(to right,#b4b4b4 50%,transparent 50%);background-size:2px 1px;background-repeat:repeat-x"></div>
<div class="a" style="left:766px;top:368px;width:1px;height:17px;background-image:linear-gradient(#b4b4b4 50%,transparent 50%);background-size:1px 2px;background-repeat:repeat-y"></div>
<div class="a" style="left:976px;top:368px;width:1px;height:17px;background-image:linear-gradient(#b4b4b4 50%,transparent 50%);background-size:1px 2px;background-repeat:repeat-y"></div>
<div class="t" style="left:704.4px;top:370.09px;font-size:11px;line-height:13px;">502/55</div>
<div class="t" style="left:770.6px;top:370.09px;font-size:11px;line-height:13px;">Terminal tax paid</div>
<div class="a" style="left:683px;top:385px;width:18px;height:17px;background:linear-gradient(#fefefe 40%,#e6e6e6);border-right:1px solid #a8a8a8;border-bottom:1px solid #bdbdbd"></div>
<div class="a" style="left:701px;top:385px;width:276px;height:17px;background:#fefefe"></div>
<div class="a" style="left:701px;top:401px;width:276px;height:1px;background-image:linear-gradient(to right,#b4b4b4 50%,transparent 50%);background-size:2px 1px;background-repeat:repeat-x"></div>
<div class="a" style="left:766px;top:385px;width:1px;height:17px;background-image:linear-gradient(#b4b4b4 50%,transparent 50%);background-size:1px 2px;background-repeat:repeat-y"></div>
<div class="a" style="left:976px;top:385px;width:1px;height:17px;background-image:linear-gradient(#b4b4b4 50%,transparent 50%);background-size:1px 2px;background-repeat:repeat-y"></div>
<div class="t" style="left:704.4px;top:387.09px;font-size:11px;line-height:13px;">502/56</div>
<div class="t" style="left:770.6px;top:387.09px;font-size:11px;line-height:13px;">Provisional tax paid</div>
<div class="a" style="left:683px;top:402px;width:18px;height:17px;background:linear-gradient(#fefefe 40%,#e6e6e6);border-right:1px solid #a8a8a8;border-bottom:1px solid #bdbdbd"></div>
<div class="a" style="left:701px;top:402px;width:276px;height:17px;background:#fafad4"></div>
<div class="a" style="left:701px;top:418px;width:276px;height:1px;background-image:linear-gradient(to right,#b4b4b4 50%,transparent 50%);background-size:2px 1px;background-repeat:repeat-x"></div>
<div class="a" style="left:766px;top:402px;width:1px;height:17px;background-image:linear-gradient(#b4b4b4 50%,transparent 50%);background-size:1px 2px;background-repeat:repeat-y"></div>
<div class="a" style="left:976px;top:402px;width:1px;height:17px;background-image:linear-gradient(#b4b4b4 50%,transparent 50%);background-size:1px 2px;background-repeat:repeat-y"></div>
<div class="t" style="left:704.4px;top:404.09px;font-size:11px;line-height:13px;">502/57</div>
<div class="t" style="left:770.6px;top:404.09px;font-size:11px;line-height:13px;">Earner Premium</div>
<svg class="a" style="left:688px;top:185px" width="5" height="8" viewBox="0 0 5 8"><path d="M0 0L5 4L0 8Z" fill="#a8a8a8"/></svg>
<div class="a" style="left:682px;top:501px;width:296px;height:32px;background:#e3e3e3;border:1px solid #6e6e6e"></div>
<div class="a" style="left:685px;top:507px;width:181px;height:20px;background:#fff;border:1px solid #acacac"></div>
<div class="a" style="left:848px;top:507px;width:18px;height:20px;background:#ebebeb;border:1px solid #acacac;box-shadow:inset 0 0 0 1px #d9d9d9"></div>
<svg class="a" style="left:853px;top:515px" width="8" height="6" viewBox="0 0 8 6"><path d="M0.5 0.8 L4 4.3 L7.5 0.8" fill="none" stroke="#555" stroke-width="1.8"/></svg>
<div class="t" style="left:687px;top:510.69px;font-size:11px;line-height:13px;">Display account codes</div>
<div class="t" style="left:874.5px;top:510.89px;font-size:11px;line-height:13px;color:#1a1aa8;letter-spacing:-0.13px"><u>Edit&nbsp; Range Setting</u></div>
<svg class="a" style="left:858px;top:191px" width="14" height="21" viewBox="0 0 14 21"><path d="M1.2 1.2V17.5L3.8 15.4L7.6 19.5L10.5 18L8.4 13.7H12.8Z" fill="#fff" stroke="#111" stroke-width="1" stroke-linejoin="miter"/></svg>
</body></html>
